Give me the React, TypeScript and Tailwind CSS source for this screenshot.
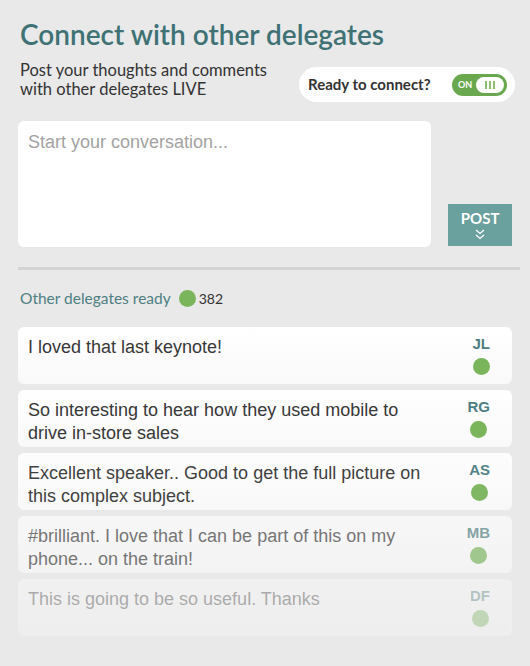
import React from 'react';

const messages = [
  { text: 'I loved that last keynote!', who: 'JL', fade: 'opacity-100' },
  { text: 'So interesting to hear how they used mobile to drive in-store sales', who: 'RG', fade: 'opacity-100' },
  { text: 'Excellent speaker.. Good to get the full picture on this complex subject.', who: 'AS', fade: 'opacity-95' },
  { text: '#brilliant. I love that I can be part of this on my phone... on the train!', who: 'MB', fade: 'opacity-65' },
  { text: 'This is going to be so useful. Thanks', who: 'DF', fade: 'opacity-35' },
];

const Toggle = () => (
  <div className="flex h-[22px] w-[55px] items-center rounded-full bg-[#6aa84f] pl-[6px] pr-[3px]">
    <span className="text-[9px] font-bold leading-none text-white">ON</span>
    <div className="ml-auto flex h-[16px] w-[28px] items-center justify-center gap-[2px] rounded-full bg-white">
      <span className="h-[8px] w-[2px] bg-[#8cc06f]" />
      <span className="h-[8px] w-[2px] bg-[#8cc06f]" />
      <span className="h-[8px] w-[2px] bg-[#8cc06f]" />
    </div>
  </div>
);

export default function App() {
  return (
    <div className="min-h-[666px] w-[530px] bg-[#e9e9e9] font-['Lato',sans-serif]">
      <div className="px-[18px] pt-[15px]">
        {/* Header */}
        <h1 className="pl-[2px] text-[28px] font-semibold leading-[38px] text-[#3e7275]">
          Connect with other delegates
        </h1>
        <div className="mt-[8px] flex items-start">
          <p className="pl-[2px] text-[16.5px] leading-[19px] text-[#333]">
            Post your thoughts and comments
            <br />
            with other delegates LIVE
          </p>
          <div className="ml-auto mr-[-3px] mt-[6px] flex h-[35px] w-[216px] items-center rounded-full bg-white pl-[9px] pr-[8px]">
            <span className="text-[15px] font-bold text-[#333]">Ready to connect?</span>
            <div className="ml-auto">
              <Toggle />
            </div>
          </div>
        </div>

        {/* Composer */}
        <div className="mt-[19px] flex items-end">
          <div className="h-[126px] w-[414px] rounded-[6px] bg-white px-[10px] py-[8px]">
            <span className="font-['Liberation_Sans',sans-serif] text-[18px] text-[#a3a3a3]">
              Start your conversation...
            </span>
          </div>
          <button className="mb-[1px] ml-[17px] flex h-[42px] w-[64px] flex-col items-center justify-center bg-[#6aa09d] pt-[1px] text-white">
            <span className="text-[15px] font-bold leading-[16px]">POST</span>
            <svg width="12" height="13" viewBox="0 0 12 13" fill="none" stroke="white" strokeWidth="1.3" className="mt-[2px]">
              <path d="M2 2 L6 5.5 L10 2" />
              <path d="M2 7 L6 10.5 L10 7" />
            </svg>
          </button>
        </div>

        <div className="mt-[20px] h-[3px] w-[502px] bg-[#d4d4d4]" />

        {/* Status */}
        <div className="mt-[17px] flex items-center pl-[2px]">
          <span className="text-[15.5px] text-[#4e7f82]">Other delegates ready</span>
          <span className="ml-[8px] h-[17px] w-[17px] rounded-full bg-[#7ab55c]" />
          <span className="ml-[3px] text-[14px] text-[#333]">382</span>
        </div>

        {/* Messages */}
        <div className="mt-[17px] flex w-[494px] flex-col gap-[6px]">
          {messages.map((m) => (
            <div
              key={m.who}
              className={`${m.fade} flex h-[57px] rounded-[6px] bg-gradient-to-b from-white to-[#f9f9f9] pl-[10px] pr-[22px] pt-[9px]`}
            >
              <p className="w-[405px] font-['Liberation_Sans',sans-serif] text-[18px] leading-[23px] text-[#383838]">
                {m.text}
              </p>
              <div className="ml-auto flex flex-col items-center">
                <span className="font-['Liberation_Sans',sans-serif] text-[15px] font-bold leading-[16px] text-[#4e7f82]">
                  {m.who}
                </span>
                <span className="mt-[6px] h-[17px] w-[17px] rounded-full bg-[#7ab55c]" />
              </div>
            </div>
          ))}
        </div>
      </div>
    </div>
  );
}
